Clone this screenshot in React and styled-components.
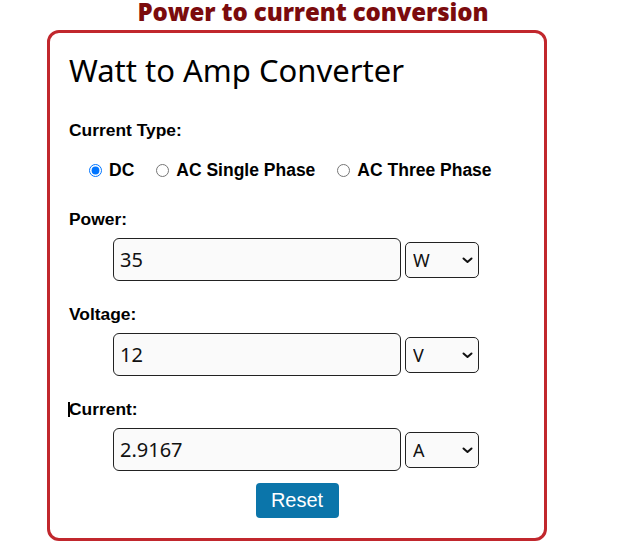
import styled, { createGlobalStyle } from 'styled-components'

const GlobalStyle = createGlobalStyle`
  html, body {
    margin: 0;
    padding: 0;
    background: #ffffff;
  }
  * {
    box-sizing: border-box;
  }
`

const Page = styled.div`
  width: 626px;
  height: 559px;
  overflow: hidden;
  background: #ffffff;
`

const PageTitle = styled.h2`
  margin: 0 0 6px 0;
  height: 24px;
  line-height: 24px;
  text-align: center;
  font-family: "Open Sans", sans-serif;
  font-weight: 800;
  font-size: 24px;
  letter-spacing: -0.1px;
  color: #7b0b0d;
`

const Card = styled.div`
  width: 500px;
  margin-left: 47px;
  border: 3px solid #c1272d;
  border-radius: 12px;
  padding: 17px 19px 20px 19px;
  font-family: "Liberation Sans", Arial, sans-serif;
`

const Heading = styled.h1`
  margin: 0 0 31px 0;
  font-family: "Noto Sans", sans-serif;
  font-weight: 400;
  font-size: 31px;
  line-height: 40px;
  color: #000;
`

const Label = styled.div`
  font-weight: 700;
  font-size: 17.4px;
  line-height: 18px;
  color: #000;
  position: relative;
`

const Caret = styled.span`
  position: absolute;
  left: -1px;
  top: 2px;
  width: 2px;
  height: 15px;
  background: #000;
`

const RadioRow = styled.div`
  display: flex;
  gap: 22px;
  padding-left: 20px;
  margin: 22px 0 31px 0;
`

const RadioOption = styled.label`
  display: flex;
  align-items: center;
  gap: 7px;
  font-weight: 700;
  font-size: 17.5px;
  line-height: 18px;
  color: #000;

  input {
    margin: 0;
    width: 13px;
    height: 13px;
  }
`

const Field = styled.div`
  display: flex;
  align-items: center;
  gap: 4px;
  padding-left: 44px;
  margin: 10px 0 24px 0;
`

const TextInput = styled.input`
  width: 288px;
  height: 43px;
  border: 1px solid #222;
  border-radius: 6px;
  background: #fafafa;
  padding: 0 6px;
  font-family: "Noto Sans", sans-serif;
  font-size: 20px;
  color: #111;
  outline: none;
`

const SelectWrap = styled.div`
  position: relative;
  width: 74px;
  height: 36px;

  svg {
    position: absolute;
    right: 6px;
    top: 15px;
    pointer-events: none;
  }
`

const Select = styled.select`
  appearance: none;
  width: 100%;
  height: 100%;
  border: 1px solid #222;
  border-radius: 5px;
  background: #fafafa;
  padding: 0 0 0 7px;
  font-family: "Noto Sans", sans-serif;
  font-size: 18px;
  color: #111;
`

const Actions = styled.div`
  display: flex;
  justify-content: center;
  margin-top: -12px;
`

const ResetButton = styled.button`
  width: 83px;
  height: 35px;
  border: none;
  border-radius: 4px;
  background: #0b75aa;
  color: #fff;
  font-family: "Liberation Sans", Arial, sans-serif;
  font-size: 20px;
  padding: 0;
`

const Chevron = () => (
  <svg width="11" height="7" viewBox="0 0 11 7">
    <path d="M1.5 1.5 L5.5 5 L9.5 1.5" fill="none" stroke="#111" strokeWidth="2" strokeLinecap="round" strokeLinejoin="round" />
  </svg>
)

const UnitField = ({ value, unit }) => (
  <Field>
    <TextInput defaultValue={value} />
    <SelectWrap>
      <Select defaultValue={unit}>
        <option value={unit}>{unit}</option>
      </Select>
      <Chevron />
    </SelectWrap>
  </Field>
)

export default function App() {
  return (
    <Page>
      <GlobalStyle />
      <PageTitle>Power to current conversion</PageTitle>
      <Card>
        <Heading>Watt to Amp Converter</Heading>
        <Label>Current Type:</Label>
        <RadioRow>
          <RadioOption><input type="radio" name="type" defaultChecked />DC</RadioOption>
          <RadioOption><input type="radio" name="type" />AC Single Phase</RadioOption>
          <RadioOption><input type="radio" name="type" />AC Three Phase</RadioOption>
        </RadioRow>
        <Label>Power:</Label>
        <UnitField value="35" unit="W" />
        <Label>Voltage:</Label>
        <UnitField value="12" unit="V" />
        <Label><Caret />Current:</Label>
        <UnitField value="2.9167" unit="A" />
        <Actions>
          <ResetButton>Reset</ResetButton>
        </Actions>
      </Card>
    </Page>
  )
}
